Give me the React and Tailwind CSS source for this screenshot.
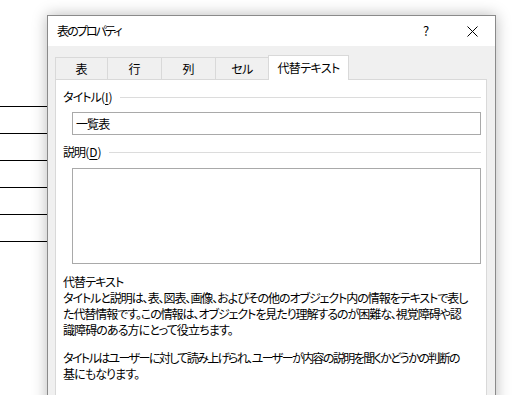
import React from "react";

const font = {
  fontFamily: '"Noto Sans CJK JP", "Noto Sans", sans-serif',
};

function Tab({ w, first, children }) {
  return (
    <div
      className={`h-[22px] ${w} flex items-center justify-center border-t border-r border-[#d9d9d9] text-[12px] text-black ${first ? "border-l" : ""}`}
    >
      {children}
    </div>
  );
}

export default function App() {
  return (
    <div
      className="w-[512px] h-[395px] overflow-hidden bg-white flex [font-feature-settings:'palt']"
      style={font}
    >
      {/* document behind */}
      <div className="w-[47px] shrink-0 pt-[106px] flex flex-col">
        <div className="h-[27px] border-t border-black" />
        <div className="h-[27px] border-t border-black" />
        <div className="h-[27px] border-t border-black" />
        <div className="h-[27px] border-t border-black" />
        <div className="h-[27px] border-t border-black" />
        <div className="h-[27px] border-t border-black" />
      </div>

      {/* dialog */}
      <div className="relative mt-[15px] w-[449px] h-[400px] shrink-0 border border-[#8a8a8a] bg-[#f0f0f0] shadow-[0_0_14px_rgba(0,0,0,0.28)] flex flex-col">
        {/* title bar */}
        <div className="h-[30px] bg-white flex items-center justify-between">
          <span className="pl-[9px] text-[12px] text-black leading-none tracking-[-1.9px]">表のプロパティ</span>
          <div className="flex h-full">
            <div className="w-[46px] h-full flex items-center justify-center text-[13px] text-black">?</div>
            <div className="w-[46px] h-full flex items-center justify-center">
              <svg width="11" height="11" viewBox="0 0 11 11">
                <path d="M0.5 0.5 L10.5 10.5 M10.5 0.5 L0.5 10.5" stroke="#000" strokeWidth="1" fill="none" />
              </svg>
            </div>
          </div>
        </div>

        {/* tab area */}
        <div className="flex-1 pl-[7px] pr-[8px] pt-[9px] flex flex-col">
          <div className="flex items-end h-[24px]">
            <Tab w="w-[53px]" first>表</Tab>
            <Tab w="w-[54px]">行</Tab>
            <Tab w="w-[54px]">列</Tab>
            <Tab w="w-[53px]"><span className="tracking-[-0.8px]">セル</span></Tab>
            <div className="relative z-10 -mb-px h-[25px] w-[81px] -ml-px bg-white border border-b-0 border-[#d9d9d9] flex items-center justify-center text-[12px] text-black tracking-[-0.6px]">
              代替テキスト
            </div>
          </div>

          {/* panel */}
          <div className="flex-1 bg-white border border-[#d9d9d9] pl-[7px] pr-[5px] pt-[9px] text-[12px] text-black leading-[16px] tracking-[-0.9px]">
            <div className="flex items-center h-[16px]">
              <span className="whitespace-nowrap">
                タイトル<span className="tracking-normal">(<span className="underline underline-offset-2">I</span>)</span>
              </span>
              <div className="flex-1 h-px bg-[#dcdcdc] ml-[7px]" />
            </div>
            <div className="ml-[9px] mt-[7px] h-[23px] border border-[#a9a9a9] flex items-center pl-[3px]">
              一覧表
            </div>
            <div className="flex items-center h-[16px] mt-[9px]">
              <span className="whitespace-nowrap">
                説明<span className="tracking-normal">(<span className="underline underline-offset-2">D</span>)</span>
              </span>
              <div className="flex-1 h-px bg-[#dcdcdc] ml-[7px]" />
            </div>
            <div className="ml-[9px] mt-[8px] h-[96px] border border-[#a9a9a9]" />
            <div className="mt-[10px] whitespace-nowrap">代替テキスト</div>
            <div className="whitespace-nowrap">
              <div className="tracking-[-1.05px]">タイトルと説明は、表、図表、画像、およびその他のオブジェクト内の情報をテキストで表し</div>
              <div className="tracking-[-1.05px]">た代替情報です。この情報は、オブジェクトを見たり理解するのが困難な、視覚障碍や認</div>
              <div>識障碍のある方にとって役立ちます。</div>
            </div>
            <div className="mt-[12px] whitespace-nowrap">
              <div className="tracking-[-1.6px]">タイトルはユーザーに対して読み上げられ、ユーザーが内容の説明を聞くかどうかの判断の</div>
              <div>基にもなります。</div>
            </div>
          </div>
        </div>
      </div>
    </div>
  );
}
